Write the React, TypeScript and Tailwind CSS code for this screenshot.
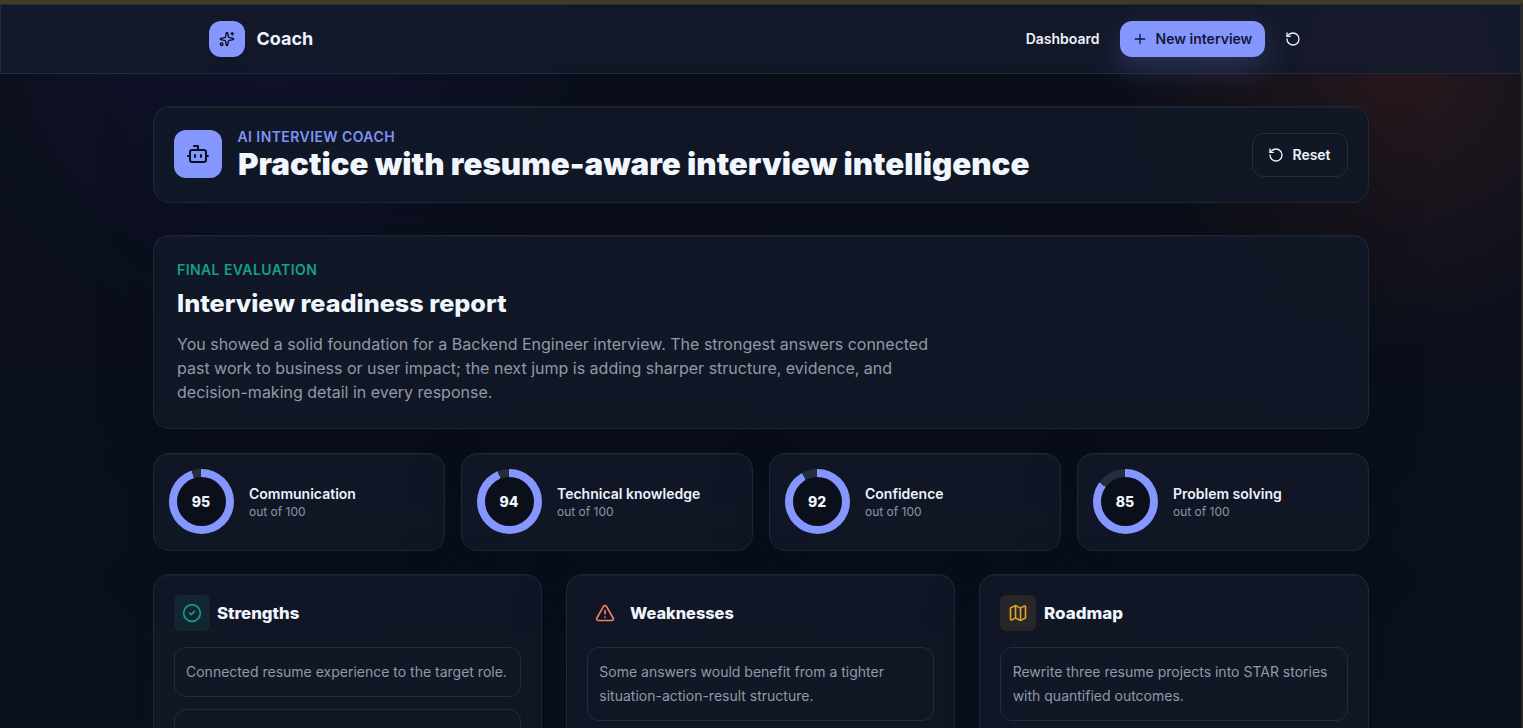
import React from "react";
import { Sparkles, Plus, RotateCcw, Bot, CircleCheck, TriangleAlert, Map as MapIcon } from "lucide-react";

const card =
  "rounded-2xl border border-[#1f2735] bg-[#111726]/94 shadow-[0_18px_60px_rgba(9,12,18,0.22),inset_0_1px_0_rgba(255,255,255,0.03)]";

const scores = [
  { label: "Communication", value: 95 },
  { label: "Technical knowledge", value: 94 },
  { label: "Confidence", value: 92 },
  { label: "Problem solving", value: 85 },
];

function ScoreCard({ label, value }: { label: string; value: number }) {
  return (
    <div className={`${card} flex h-[98px] items-start gap-4 px-[15px] pt-[15px]`}>
      <div
        className="grid size-[65px] shrink-0 place-items-center rounded-full"
        style={{ background: `conic-gradient(#8596ff ${value}%, #252e3d 0)` }}
      >
        <div className="grid size-[49px] place-items-center rounded-full bg-[#0b0f1c] text-sm font-extrabold text-[#f1f5ff]">
          {value}
        </div>
      </div>
      <div className="-ml-[0.5px] pt-[15px]">
        <p className="text-sm leading-5 font-semibold text-[#edf2fb]">{label}</p>
        <p className="text-xs leading-4 text-[#8d95a4]">out of 100</p>
      </div>
    </div>
  );
}

function Column({
  title,
  icon,
  tint,
  items,
  titleClass,
}: {
  title: string;
  icon: React.ReactNode;
  tint: string;
  items: string[];
  titleClass: string;
}) {
  return (
    <section className={`${card} h-[400px] px-5 pt-5`}>
      <div className="flex items-center">
        <div className={`grid size-9 place-items-center rounded-md ${tint}`}>{icon}</div>
        <h3
          className={`-mt-px ml-[7.5px] origin-left text-base leading-6 font-extrabold text-[#f1f5fc] ${titleClass}`}
        >
          {title}
        </h3>
      </div>
      <div className="mt-4 flex flex-col gap-3">
        {items.map((item) => (
          <p
            key={item}
            className="rounded-xl border border-[#252d3b] px-[11.5px] py-3 text-sm leading-6 text-[#9299a7]"
          >
            {item}
          </p>
        ))}
      </div>
    </section>
  );
}

export default function App() {
  return (
    <div className="flex h-[728px] w-full flex-col overflow-hidden bg-[#443a20] font-['Inter',sans-serif]">
      <div className="h-[3px] shrink-0" />
      <div className="flex min-h-0 flex-1 border-t border-r-2 border-t-[#3a3d42] border-r-[#2b2a2b]">
        <div className="w-full bg-[radial-gradient(circle_at_18%_0%,rgba(40,30,110,0.26),transparent_24%),radial-gradient(circle_at_92%_8%,rgba(115,46,36,0.28),transparent_19%),linear-gradient(#0a0f1a,#0a101d)]">
          <header className="h-[70px] border border-[#232a38] bg-[#141a2b]/90">
            <div className="mx-auto flex h-[68px] w-[1152px] items-center justify-between pr-[26px] pl-6">
              <div className="flex items-center gap-3">
                <div className="grid size-9 place-items-center rounded-xl bg-[#8596ff] text-[#0b1020] shadow-lg">
                  <Sparkles size={16} />
                </div>
                <span className="text-lg font-bold text-[#edf2fb]">Coach</span>
              </div>
              <div className="flex items-center text-sm font-semibold text-[#edf2fb]">
                <span>Dashboard</span>
                <div className="ml-5 flex h-9 w-[145px] items-center justify-center gap-2 rounded-xl bg-[#8596ff] text-[#111936] shadow-[0_12px_32px_rgba(133,150,255,0.22)]">
                  <Plus size={16} />
                  <span>New interview</span>
                </div>
                <div className="ml-2.5 grid size-9 place-items-center">
                  <RotateCcw size={16} />
                </div>
              </div>
            </div>
          </header>

          <main className="mx-auto w-[1216px] pt-8">
            <section className={`${card} flex h-[97px] items-center justify-between px-5`}>
              <div className="flex items-center gap-4">
                <div className="mb-px grid size-12 place-items-center rounded-xl bg-[#8596ff] text-[#0b1020]">
                  <Bot size={24} />
                </div>
                <div>
                  <p className="text-sm leading-5 font-semibold tracking-[0.42px] text-[#8191f5]">AI INTERVIEW COACH</p>
                  <h1 className="-mt-px origin-left scale-x-[1.044] text-3xl leading-9 font-black whitespace-nowrap text-[#f1f5fc]">
                    Practice with resume-aware interview intelligence
                  </h1>
                </div>
              </div>
              <div className="flex h-11 w-24 items-center justify-center gap-2 rounded-xl border border-[#272e3b] text-sm font-semibold text-[#edf2fb]">
                <RotateCcw size={16} />
                Reset
              </div>
            </section>

            <section className={`${card} mt-8 h-[194px] px-[23.5px] pt-6`}>
              <p className="text-sm leading-5 font-semibold tracking-[0.42px] text-[#12a086]">FINAL EVALUATION</p>
              <h2 className="mt-2 origin-left scale-x-[1.05] text-2xl leading-8 font-extrabold text-[#f1f5fc]">
                Interview readiness report
              </h2>
              <p className="mt-3 w-[768px] text-base leading-6 text-[#9299a7]">
                You showed a solid foundation for a Backend Engineer interview. The strongest answers connected past
                work to business or user impact; the next jump is adding sharper structure, evidence, and
                decision-making detail in every response.
              </p>
            </section>

            <div className="mt-6 grid grid-cols-4 gap-4">
              {scores.map((s) => (
                <ScoreCard key={s.label} {...s} />
              ))}
            </div>

            <div className="mt-[23px] grid grid-cols-3 gap-6">
              <Column
                title="Strengths"
                icon={<CircleCheck size={20} />}
                tint="bg-[#122630] text-[#12a086]"
                titleClass="scale-x-[1.05]"
                items={["Connected resume experience to the target role.", "Gave confident examples with specific results."]}
              />
              <Column
                title="Weaknesses"
                icon={<TriangleAlert size={20} />}
                tint="text-[#f77d66]"
                titleClass="scale-x-[1.02]"
                items={["Some answers would benefit from a tighter situation-action-result structure."]}
              />
              <Column
                title="Roadmap"
                icon={<MapIcon size={20} />}
                tint="bg-[#272628] text-[#dda029]"
                titleClass="scale-x-[1.06]"
                items={["Rewrite three resume projects into STAR stories with quantified outcomes."]}
              />
            </div>
          </main>
        </div>
      </div>
    </div>
  );
}
